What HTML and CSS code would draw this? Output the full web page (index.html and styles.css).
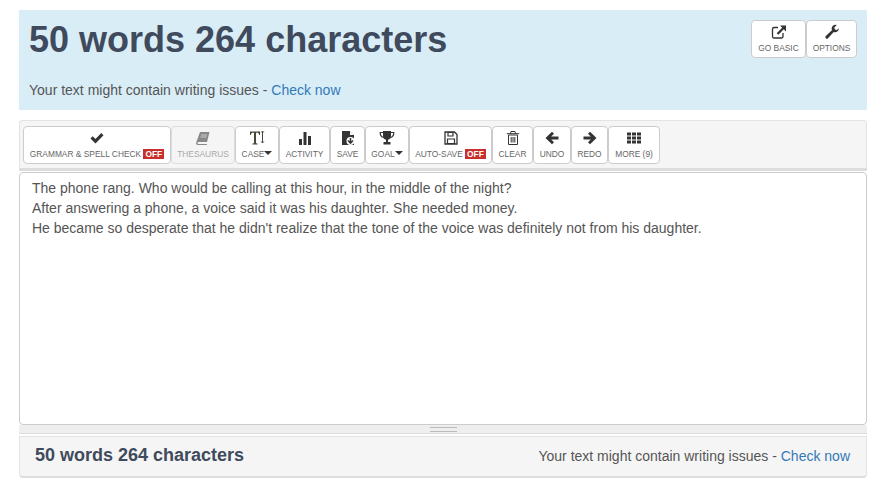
FILE: index.html
```html
<!DOCTYPE html>
<html lang="en">
<head>
<meta charset="utf-8">
<title>Word Counter</title>
<link rel="stylesheet" href="styles.css">
</head>
<body>
<div class="page">
  <header class="banner">
    <div class="banner-text">
      <h1 class="count-big">50 words 264 characters</h1>
      <p class="issues">Your text might contain writing issues - <a href="#" class="link">Check now</a></p>
    </div>
    <div class="btn-group">
      <button class="tool w-basic"><svg class="ico" viewBox="0 0 16 16"><path d="M12 9v3.500a1.500 1.500 0 0 1-1.500 1.500H3a1.500 1.500 0 0 1-1.500-1.500V5A1.500 1.500 0 0 1 3 3.500h4" fill="none" stroke="#333" stroke-width="1.300"/><path d="M9 1.500h6v6l-2.200-2.200-5.500 5.500-1.600-1.600 5.500-5.500z" fill="#333"/></svg><span class="lbl">GO BASIC</span></button>
      <button class="tool w-options"><svg class="ico" viewBox="0 0 16 16"><path d="M15 4.300a4 4 0 0 1-5.300 3.800L4 14.200a1.500 1.500 0 0 1-2.200-2.200l6.100-5.700A4 4 0 0 1 12.800 1L10.300 3.500l.6 2 2 .6z" fill="#333"/></svg><span class="lbl">OPTIONS</span></button>
    </div>
  </header>

  <nav class="toolbar">
    <button class="tool w-grammar"><svg class="ico" viewBox="0 0 16 16"><path d="M1.500 8.500l2.200-2.200 2.800 2.800 5.800-6 2.200 2.200-8 8.200z" fill="#333"/></svg><span class="lbl">GRAMMAR &amp; SPELL CHECK <b class="off">OFF</b></span></button>
    <button class="tool w-thes muted"><svg class="ico" viewBox="0 0 16 16"><path d="M5 2h9.500l-2.500 10H3.500a1 1 0 0 0 0 2H12l-.3 1H3a2 2 0 0 1-1.800-2.500z" fill="#888"/><path d="M6 5h6M5.500 7h6" stroke="#ddd" stroke-width=".8"/></svg><span class="lbl">THESAURUS</span></button>
    <button class="tool w-case"><svg class="ico" viewBox="0 0 16 16"><path d="M1 1.500h10v3.500h-.8c-.3-1.700-.8-2.300-2.400-2.300H7v9.800c0 .8.300 1 1.600 1.100v.9H3.400v-.9c1.300-.1 1.600-.3 1.600-1.100V2.700h-.8c-1.600 0-2.100.6-2.400 2.300H1z" fill="#4a4636"/><path d="M13.500 1.500v11M12.200 2.500l1.300-1.500 1.300 1.500M12.200 11.500l1.300 1.500 1.300-1.500" stroke="#444" stroke-width="1" fill="none"/></svg><span class="lbl">CASE<i class="caret"></i></span></button>
    <button class="tool w-activity"><svg class="ico" viewBox="0 0 16 16"><path d="M2 9h3v6H2zM6.500 2h3v13h-3zM11 6h3v9h-3z" fill="#333"/></svg><span class="lbl">ACTIVITY</span></button>
    <button class="tool w-save"><svg class="ico" viewBox="0 0 16 16"><path d="M2 1h7.500L14 5.500V15H2z" fill="#333"/><path d="M9.500 1v4.500H14" fill="#fff" stroke="#333"/><circle cx="10.500" cy="11" r="4" fill="#fff"/><path d="M10.500 8v4.500M8 10.500l2.500 2.700 2.500-2.700" stroke="#333" stroke-width="1.500" fill="none"/></svg><span class="lbl">SAVE</span></button>
    <button class="tool w-goal"><svg class="ico" viewBox="0 0 16 16"><path d="M4 1h8v5a4 4 0 0 1-3 3.800V12h2.500v2.500h-7V12H7V9.800A4 4 0 0 1 4 6z" fill="#333"/><path d="M4 2.500H1.200c0 3 1 4.500 3.500 5M12 2.500h2.800c0 3-1 4.500-3.500 5" fill="none" stroke="#333" stroke-width="1.200"/></svg><span class="lbl">GOAL<i class="caret"></i></span></button>
    <button class="tool w-auto"><svg class="ico" viewBox="0 0 16 16"><path d="M2 2h9.500L14 4.500V14H2z" fill="none" stroke="#333" stroke-width="1.300"/><path d="M5 2.500h5v3.500H5zM4.500 9h7v4.500h-7z" fill="none" stroke="#333" stroke-width="1.200"/></svg><span class="lbl">AUTO-SAVE <b class="off">OFF</b></span></button>
    <button class="tool w-clear"><svg class="ico" viewBox="0 0 16 16"><path d="M3.500 5h9v9.500h-9zM1.800 3.700h12.400M5.500 3.500L6 1.500h4l.5 2M6.200 7v5.500M8 7v5.500M9.800 7v5.500" fill="none" stroke="#333" stroke-width="1"/></svg><span class="lbl">CLEAR</span></button>
    <button class="tool w-undo"><svg class="ico" viewBox="0 0 16 16"><path d="M1.500 8L8 1.800l2 2-2.800 2.700h7.300v3H7.200l2.800 2.700-2 2z" fill="#333"/></svg><span class="lbl">UNDO</span></button>
    <button class="tool w-redo"><svg class="ico" viewBox="0 0 16 16"><path d="M14.500 8L8 1.800l-2 2 2.800 2.700H1.500v3h7.300L6 12.200l2 2z" fill="#333"/></svg><span class="lbl">REDO</span></button>
    <button class="tool w-more"><svg class="ico" viewBox="0 0 16 16"><path d="M1 2.500h4v3H1zM6 2.500h4v3H6zM11 2.500h4v3h-4zM1 6.500h4v3H1zM6 6.500h4v3H6zM11 6.500h4v3h-4zM1 10.500h4v3H1zM6 10.500h4v3H6zM11 10.500h4v3h-4z" fill="#333"/></svg><span class="lbl">MORE (9)</span></button>
  </nav>

  <main class="editor">
    <p>The phone rang. Who would be calling at this hour, in the middle of the night?</p>
    <p>After answering a phone, a voice said it was his daughter. She needed money.</p>
    <p>He became so desperate that he didn't realize that the tone of the voice was definitely not from his daughter.</p>
  </main>
  <div class="resizer"><span class="grip"></span></div>
  <footer class="status">
    <strong class="count-small">50 words 264 characters</strong>
    <span class="issues-small">Your text might contain writing issues - <a href="#" class="link">Check now</a></span>
  </footer>
</div>
</body>
</html>
```
FILE: styles.css
```css
* { box-sizing: border-box; }
html, body { margin: 0; padding: 0; background: #fff; }
body { font-family: "Liberation Sans", Arial, sans-serif; color: #555; }
.page { width: 848px; margin-left: 19px; padding-top: 10px; }

.banner { height: 100px; background: #d9edf7; display: flex; justify-content: space-between; padding: 10px 10px 0 10px; }
.count-big { margin: 0; font-size: 36px; line-height: 40px; font-weight: bold; color: #3f4a5c; }
.issues { margin: 20px 0 0; font-size: 14px; line-height: 20px; color: #555; }
.link { color: #337ab7; text-decoration: none; }

.btn-group { display: flex; align-items: flex-start; }
.tool { height: 38px; padding: 3px 0 0; margin: 0; border: 1px solid #ccc; border-radius: 4px; background: #fff; display: flex; flex-direction: column; align-items: center; font-family: inherit; color: #555; flex: none; }
.ico { width: 16px; height: 16px; display: block; margin-bottom: 2px; }
.lbl { font-size: 8.400px; line-height: 12px; white-space: nowrap; color: #666; }
.off { background: #c9302c; color: #fff; font-weight: bold; padding: 0 2px; font-size: 8.400px; }
.caret { display: inline-block; width: 0; height: 0; border: 4px solid transparent; border-top-color: #333; border-bottom: 0; vertical-align: 2px; }
.muted { background: #f5f5f5; border-color: #ddd; }
.muted .lbl { color: #aaa; }

.w-basic { width: 55px; }
.w-options { width: 51px; }
.w-grammar { width: 148px; }
.w-thes { width: 64px; }
.w-case { width: 44px; }
.w-activity { width: 51px; }
.w-save { width: 35px; }
.w-goal { width: 44px; }
.w-auto { width: 83px; }
.w-clear { width: 41px; }
.w-undo { width: 38px; }
.w-redo { width: 37px; }
.w-more { width: 52px; }

.toolbar { margin-top: 10px; height: 51px; background: #f5f5f5; border: 1px solid #e3e3e3; border-bottom: 3px solid #ddd; border-radius: 4px 4px 0 0; display: flex; padding: 5px 0 0 3px; }
.editor { margin-top: 1px; height: 253px; background: #fff; border: 1px solid #ccc; border-radius: 4px; padding: 5px 12px; font-size: 14px; line-height: 20px; color: #555; }
.editor p { margin: 0; }
.resizer { height: 9px; background: #eee; display: flex; align-items: center; justify-content: center; border-bottom: 1px solid #ddd; }
.grip { width: 27px; height: 5px; border-top: 1px solid #bbb; border-bottom: 1px solid #bbb; }
.status { margin-top: 2px; height: 42px; background: #f5f5f5; border: 1px solid #e3e3e3; border-bottom: 2px solid #ddd; border-radius: 0 0 4px 4px; display: flex; justify-content: space-between; align-items: center; padding: 0 16px 2px 15px; }
.count-small { font-size: 18px; color: #3f4a5c; }
.issues-small { font-size: 14px; color: #555; }
```
